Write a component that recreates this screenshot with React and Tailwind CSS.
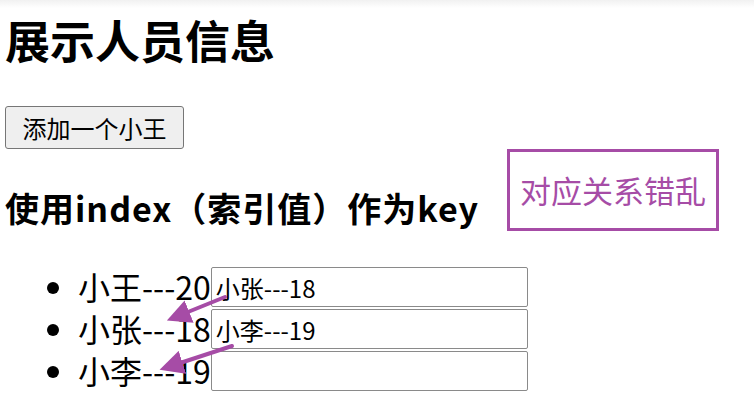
import React, { useState } from 'react';

const font = { fontFamily: '"Noto Sans CJK SC", "Noto Sans", sans-serif' };

const App = () => {
    const [persons] = useState([
        { id: '003', name: '小王', age: 20 },
        { id: '001', name: '小张', age: 18 },
        { id: '002', name: '小李', age: 19 },
    ]);
    const inputs = ['小张---18', '小李---19', ''];

    return (
        <div className="relative w-[754px] h-[411px] bg-white text-black overflow-hidden" style={font}>
            <div className="h-[8px] bg-gradient-to-b from-[#f1f1f1] to-white" />
            <div className="px-[5px]">
                <h1 className="mt-[6px] text-[45px] leading-[52px] font-bold">展示人员信息</h1>
                <button className="mt-[40px] h-[43px] w-[179px] border border-[#767676] rounded-[3px] bg-[#efefef] text-[24px] leading-none text-black">
                    添加一个小王
                </button>
                <h2 className="mt-[37px] text-[34px] leading-[44px] font-bold tracking-[1px]">使用index（索引值）作为key</h2>
                <ul className="mt-[35px] list-disc pl-[73px] text-[32px] leading-[42px]">
                    {persons.map((p, i) => (
                        <li key={i} className="h-[42px]">
                            {p.name}---{p.age}
                            <input
                                type="text"
                                defaultValue={inputs[i]}
                                className="align-top mt-[2px] h-[40px] w-[317px] border border-[#8a8a8a] rounded-[2px] px-[4px] text-[24px] leading-none text-black outline-none"
                                style={font}
                            />
                        </li>
                    ))}
                </ul>
            </div>

            {/* annotation box */}
            <div className="absolute left-[507px] top-[149px] w-[212px] h-[82px] border-[3px] border-[#a64ca6] flex items-center justify-center text-[31px] text-[#a64ca6]">
                对应关系错乱
            </div>

            {/* annotation arrows */}
            <svg className="absolute left-0 top-0 pointer-events-none" width="754" height="411">
                <defs>
                    <marker id="head" markerWidth="6" markerHeight="6" refX="3" refY="3" orient="auto" markerUnits="strokeWidth">
                        <path d="M0,0 L6,3 L0,6 Z" fill="#a64ca6" />
                    </marker>
                </defs>
                <line x1="225" y1="297" x2="178" y2="316" stroke="#a64ca6" strokeWidth="4" strokeLinecap="round" markerEnd="url(#head)" />
                <line x1="232" y1="346" x2="171" y2="366" stroke="#a64ca6" strokeWidth="4" strokeLinecap="round" markerEnd="url(#head)" />
            </svg>
        </div>
    );
};

export default App;
